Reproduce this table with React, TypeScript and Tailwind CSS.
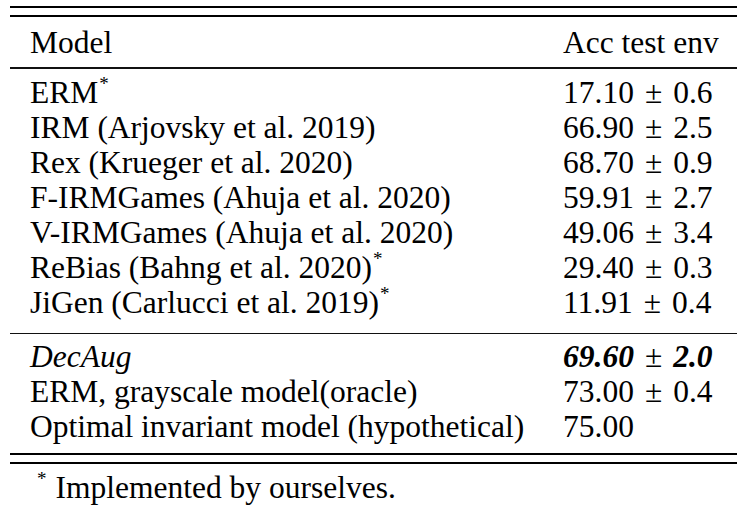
import React from 'react';

type Row = {
  name: React.ReactNode;
  acc: React.ReactNode;
};

const Star = () => (
  <span className="relative top-[-13px] ml-[1px] text-[19px] leading-none">*</span>
);

// math-mode spacing round the ± sign
const Pm = () => <span className="mx-[11px] font-normal not-italic">±</span>;

const Acc = ({ v, e }: { v: string; e?: string }) => (
  <span>
    {v}
    {e && (
      <>
        <Pm />
        {e}
      </>
    )}
  </span>
);

const baseline: Row[] = [
  { name: <>ERM<Star /></>, acc: <Acc v="17.10" e="0.6" /> },
  { name: 'IRM (Arjovsky et al. 2019)', acc: <Acc v="66.90" e="2.5" /> },
  { name: 'Rex (Krueger et al. 2020)', acc: <Acc v="68.70" e="0.9" /> },
  { name: 'F-IRMGames (Ahuja et al. 2020)', acc: <Acc v="59.91" e="2.7" /> },
  { name: 'V-IRMGames (Ahuja et al. 2020)', acc: <Acc v="49.06" e="3.4" /> },
  { name: <>ReBias (Bahng et al. 2020)<Star /></>, acc: <Acc v="29.40" e="0.3" /> },
  { name: <>JiGen (Carlucci et al. 2019)<Star /></>, acc: <Acc v="11.91" e="0.4" /> },
];

const ours: Row[] = [
  {
    name: <i>DecAug</i>,
    acc: (
      <span>
        <b className="italic">69.60</b>
        <Pm />
        <b className="italic">2.0</b>
      </span>
    ),
  },
  { name: 'ERM, grayscale model(oracle)', acc: <Acc v="73.00" e="0.4" /> },
  { name: 'Optimal invariant model (hypothetical)', acc: <Acc v="75.00" /> },
];

function TableRow({ row }: { row: Row }) {
  return (
    <div className="grid grid-cols-[533px_1fr] h-[35px] items-center pl-[20px] whitespace-nowrap">
      <div>{row.name}</div>
      <div>{row.acc}</div>
    </div>
  );
}

export default function App() {
  return (
    <div
      className="w-[742px] h-[513px] bg-white text-black text-[31.5px] leading-[35px] overflow-hidden"
      style={{ fontFamily: '"Liberation Serif", "Times New Roman", serif' }}
    >
      <div className="ml-[10px] w-[727px] pt-[6px]">
        <div className="h-[2px] bg-black" />
        <div className="h-[2px] bg-black mt-[7px]" />
        <div className="grid grid-cols-[533px_1fr] h-[50px] items-center pl-[20px]">
          <div>Model</div>
          <div>Acc test env</div>
        </div>
        <div className="h-[1.5px] bg-[#111]" />
        <div className="pt-[6px] pb-[13px]">
          {baseline.map((r, i) => (
            <TableRow key={i} row={r} />
          ))}
        </div>
        <div className="h-[1.5px] bg-[#111]" />
        <div className="pt-[5px] pb-[9px]">
          {ours.map((r, i) => (
            <TableRow key={i} row={r} />
          ))}
        </div>
        <div className="h-[2px] bg-black" />
        <div className="h-[2px] bg-black mt-[7px]" />
        <div className="mt-[6px] pl-[27px] flex items-center h-[35px] whitespace-nowrap">
          <span className="relative top-[-9px] text-[19px] leading-none mr-[9px]">*</span>
          <span>Implemented by ourselves.</span>
        </div>
      </div>
    </div>
  );
}
